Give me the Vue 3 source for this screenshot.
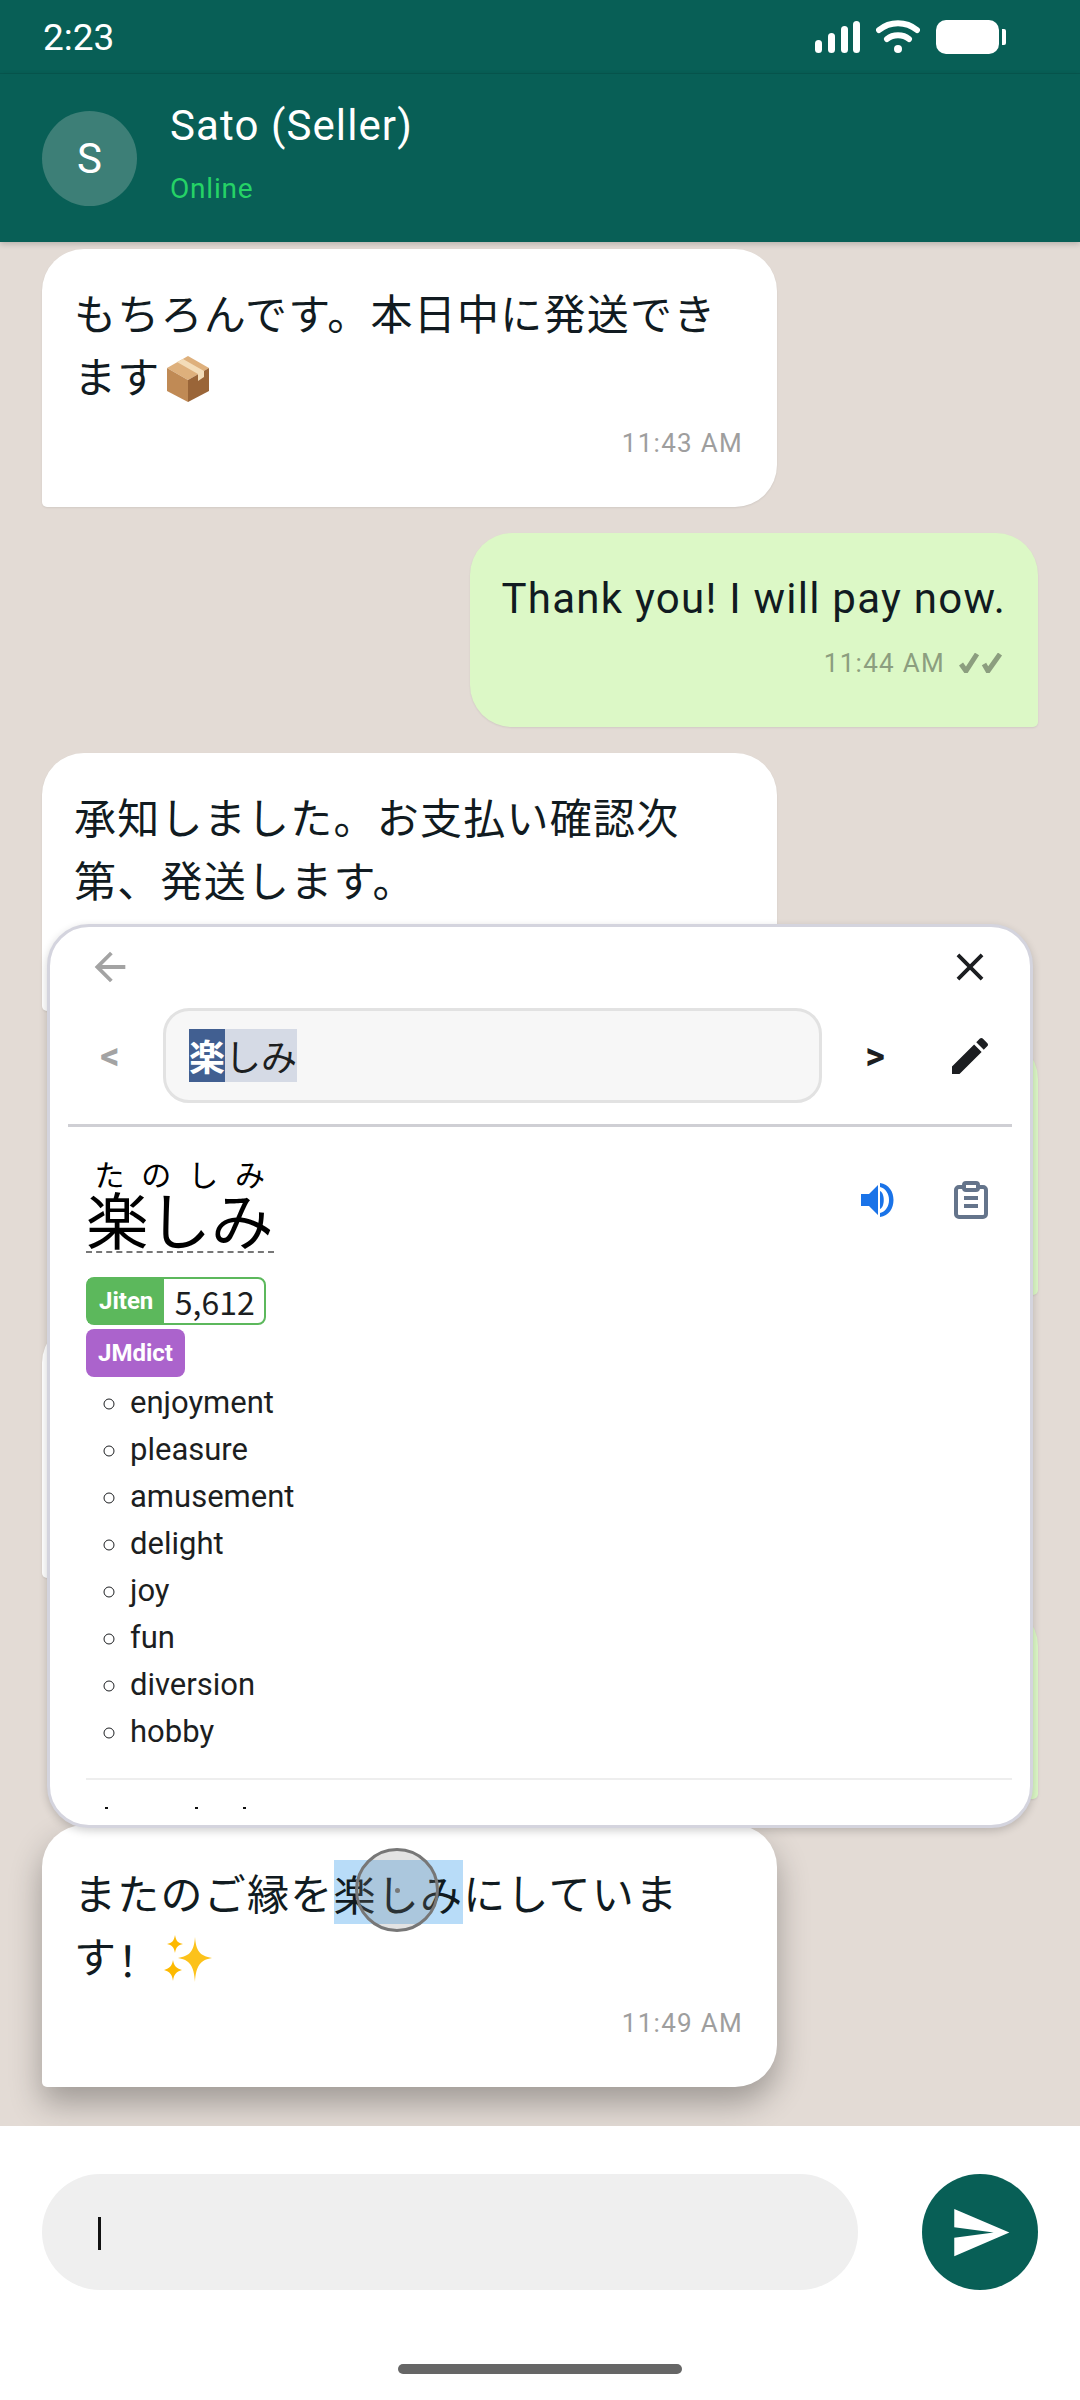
<script setup>
const senses = ['enjoyment', 'pleasure', 'amusement', 'delight', 'joy', 'fun', 'diversion', 'hobby']

// bubbles that sit behind the dictionary popup, only their edges show
const covered = [
  { id: 1, cls: 'mine tall' },
  { id: 2, cls: 'theirs tall' },
  { id: 3, cls: 'mine short' }
]
</script>

<template>
  <div class="phone">
    <div class="status">
      <span class="clock">2:23</span>
      <div class="status-icons">
        <svg width="46" height="34" viewBox="0 0 46 34" fill="#fff">
          <rect x="0" y="20" width="7" height="13" rx="3.5" />
          <rect x="13" y="13" width="7" height="20" rx="3.5" />
          <rect x="26" y="6" width="7" height="27" rx="3.5" />
          <rect x="38" y="1" width="7" height="32" rx="3.5" />
        </svg>
        <svg class="wifi" width="44" height="34" viewBox="0 0 44 34" fill="none" stroke="#fff" stroke-linecap="round">
          <path d="M3 10 C14 1 30 1 41 10" stroke-width="6" />
          <path d="M11 19 C17 14 27 14 33 19" stroke-width="6" />
          <circle cx="22" cy="29" r="4" fill="#fff" stroke="none" />
        </svg>
        <div class="battery"></div>
        <div class="battery-tip"></div>
      </div>
    </div>

    <header class="topbar">
      <div class="avatar">S</div>
      <div class="who">
        <div class="name">Sato (Seller)</div>
        <div class="online">Online</div>
      </div>
    </header>

    <main class="chat">
      <div class="bubble theirs">
        <p>もちろんです。本日中に発送でき</p>
        <p class="emoji-line">ます<svg class="box" width="48" height="48" viewBox="0 0 48 48">
          <path d="M24 1 L45 13 L24 25 L3 13 Z" fill="#deb07c" />
          <path d="M3 13 L24 25 L24 47 L3 36 Z" fill="#c08a55" />
          <path d="M45 13 L24 25 L24 47 L45 36 Z" fill="#9a6538" />
          <path d="M13 7 L34 19 L34 26 L40 22 L40 16 L19 4 Z" fill="#f3dcb8" />
        </svg></p>
        <div class="time">11:43 AM</div>
      </div>

      <div class="bubble mine sent">
        <p>Thank you! I will pay now.</p>
        <div class="time">11:44 AM
          <svg class="checks" width="44" height="20" viewBox="0 0 44 20" fill="none" stroke="#8c9e7f" stroke-width="5">
            <path d="M2 11 L7 18 L18 1" />
            <path d="M25 11 L29 18 L41 1" />
          </svg>
        </div>
      </div>

      <div class="bubble theirs">
        <p>承知しました。お支払い確認次</p>
        <p>第、発送します。</p>
        <div class="time"></div>
      </div>

      <div v-for="b in covered" :key="b.id" class="bubble" :class="b.cls"></div>

      <div class="bubble theirs lifted">
        <p>またのご縁を<span class="sel">楽しみ</span>にしていま</p>
        <p class="emoji-line">す<span class="bang">！</span><svg class="sparkles" width="50" height="48" viewBox="0 0 50 48">
          <path d="M32 2 C33 16 37 21 49 23 C37 25 33 31 32 47 C31 31 27 25 15 23 C27 21 31 16 32 2 Z" fill="#fcc21b" />
          <path d="M12 0 C13 6 15 8 20 9 C15 10 13 12 12 18 C11 12 9 10 4 9 C9 8 11 6 12 0 Z" fill="#fdb900" />
          <path d="M10 25 C11 31 13 33 19 35 C13 37 11 39 10 46 C9 39 7 37 1 35 C7 33 9 31 10 25 Z" fill="#fdb900" />
        </svg></p>
        <div class="time">11:49 AM</div>
      </div>
    </main>

    <footer class="composer">
      <div class="field"><span class="caret"></span></div>
      <div class="send">
        <svg width="63" height="63" viewBox="0 0 24 24" fill="#fff"><path d="M2.01 21L23 12 2.01 3 2 10l15 2-15 2z" /></svg>
      </div>
    </footer>
    <div class="gesture"><span></span></div>

    <!-- dictionary popup, floats over the chat -->
    <section class="popup">
      <div class="pop-top">
        <svg width="46" height="46" viewBox="0 0 24 24" fill="#a3a3a3"><path d="M20 11H7.83l5.59-5.59L12 4l-8 8 8 8 1.41-1.41L7.83 13H20v-2z" /></svg>
        <svg width="46" height="46" viewBox="0 0 24 24" fill="#1c1e21"><path d="M19 6.41L17.59 5 12 10.59 6.41 5 5 6.41 10.59 12 5 17.59 6.41 19 12 13.41 17.59 19 19 17.59 13.41 12z" /></svg>
      </div>
      <div class="pop-search">
        <span class="nav prev">&lt;</span>
        <div class="search"><span class="hl-first">楽</span><span class="hl-rest">しみ</span></div>
        <span class="nav next">&gt;</span>
        <svg width="48" height="48" viewBox="0 0 24 24" fill="#1c1e21"><path d="M3 17.25V21h3.75L17.81 9.94l-3.75-3.75L3 17.25zM20.71 7.04c.39-.39.39-1.02 0-1.41l-2.34-2.34c-.39-.39-1.02-.39-1.41 0l-1.83 1.83 3.75 3.75 1.83-1.83z" /></svg>
      </div>
      <div class="rule"></div>

      <div class="entry">
        <div class="entry-head">
          <ruby class="word">楽しみ<rt>たのしみ</rt></ruby>
          <div class="entry-actions">
            <svg width="36" height="36" viewBox="0 0 36 36" fill="#1a73e8">
              <path d="M1 12 H9 L18 3 V33 L9 24 H1 Z" />
              <path d="M20 9 C25 11 25 25 20 27 Z" />
              <path d="M20 1 C38 3 38 33 20 35 V31 C32 28 32 8 20 5 Z" />
            </svg>
            <svg width="34" height="38" viewBox="0 0 34 38" fill="none" stroke="#64748b" stroke-width="4">
              <rect x="2" y="6" width="30" height="30" rx="3" />
              <rect x="10" y="2" width="14" height="7" rx="2" fill="#fff" />
              <path d="M10 17 H24 M10 25 H24" />
            </svg>
          </div>
        </div>

        <div class="tag freq"><span class="tag-name">Jiten</span><span class="tag-val">5,612</span></div>
        <div class="tag dict">JMdict</div>

        <ul class="senses">
          <li v-for="s in senses" :key="s">{{ s }}</li>
        </ul>
        <div class="rule-light"></div>
        <!-- tops of the next entry, cut off by the popup edge -->
        <div class="cut"><i></i><i></i><i></i></div>
      </div>
    </section>

    <div class="touch"><span></span></div>
  </div>
</template>

<style>
html, body { margin: 0; background: #e3dbd5; }
</style>

<style scoped>
.phone {
  position: relative;
  width: 1080px;
  height: 2400px;
  display: flex;
  flex-direction: column;
  overflow: hidden;
  background: #e3dbd5;
  font-family: Roboto, "Noto Sans CJK JP", sans-serif;
  color: #1c1e21;
}
p { margin: 0; }

.status {
  height: 73px;
  flex: none;
  display: flex;
  align-items: center;
  justify-content: space-between;
  padding: 0 74px 0 43px;
  background: #085f56;
  border-bottom: 1px solid #07574f;
  color: #fff;
}
.clock { font-size: 37px; margin-top: 1px; }
.status-icons { display: flex; align-items: center; }
.wifi { margin-left: 15px; }
.battery { width: 63px; height: 34px; margin-left: 16px; background: #fff; border-radius: 10px; }
.battery-tip { width: 4px; height: 16px; margin-left: 3px; background: #fff; border-radius: 0 2px 2px 0; }

.topbar {
  height: 168px;
  flex: none;
  display: flex;
  align-items: center;
  padding: 0 42px;
  background: #085f56;
  box-shadow: 0 2px 6px rgba(0,0,0,.2);
  position: relative;
  z-index: 1;
}
.avatar {
  width: 95px;
  height: 95px;
  flex: none;
  border-radius: 50%;
  background: #3d7f77;
  color: #fff;
  font-size: 42px;
  display: flex;
  align-items: center;
  justify-content: center;
}
.who { margin-left: 33px; margin-top: -12px; }
.name { font-size: 42px; line-height: 56px; color: #fff; letter-spacing: 1.1px; }
.online { font-size: 28px; line-height: 36px; margin-top: 17px; color: #25d366; letter-spacing: .8px; }

.chat {
  flex: 1;
  min-height: 0;
  padding: 7px 42px 0;
  display: flex;
  flex-direction: column;
  gap: 26.2px;
  overflow: hidden;
}
.bubble {
  flex: none;
  box-sizing: border-box;
  padding: 35px 32px 44.5px;
  font-size: 42px;
  line-height: 63px;
  letter-spacing: 1.25px;
  color: #111b21;
}
.theirs {
  align-self: flex-start;
  width: 735px;
  background: #fff;
  border-radius: 42px 42px 42px 5px;
  box-shadow: 0 1px 2px rgba(0,0,0,.08);
}
.mine {
  align-self: flex-end;
  background: #dcf8c6;
  border-radius: 42px 42px 5px 42px;
  box-shadow: 0 1px 2px rgba(0,0,0,.08);
}
.sent { padding-top: 34px; padding-bottom: 45.5px; }
.tall { width: 568px; height: 257.5px; }
.short { width: 568px; height: 194.5px; }
.lifted { box-shadow: 0 16px 32px rgba(0,0,0,.3); position: relative; }
.time {
  display: flex;
  justify-content: flex-end;
  align-items: center;
  gap: 14px;
  height: 38px;
  margin-top: 14px;
  padding-right: 2px;
  font-size: 26px;
  line-height: 38px;
  letter-spacing: 1.3px;
  color: #9e9e9e;
}
.mine .time { color: #8c9e7f; padding-right: 3px; }
.emoji-line { display: flex; align-items: center; height: 63px; }
.box { margin-left: 3px; }
.bang { font-family: "Noto Sans CJK SC", sans-serif; }
.sparkles { margin-left: 2px; }
.sel {
  font-family: "Noto Sans CJK JP", sans-serif;
  padding: 1.5px 0;
  background: #b8dcf8;
}

.composer {
  flex: none;
  height: 274px;
  box-sizing: border-box;
  padding: 48px 42px 0;
  display: flex;
  gap: 64px;
  background: #fff;
  align-items: flex-start;
}
.field {
  flex: 1;
  height: 116px;
  border-radius: 58px;
  background: #efefef;
  display: flex;
  align-items: center;
  padding-left: 56px;
}
.caret { width: 3px; height: 33px; margin-top: 3px; background: #111; }
.send {
  width: 116px;
  height: 116px;
  border-radius: 50%;
  background: #085f56;
  display: flex;
  align-items: center;
  justify-content: center;
}
.gesture {
  position: absolute;
  left: 0;
  right: 0;
  bottom: 26px;
  display: flex;
  justify-content: center;
}
.gesture span { width: 284px; height: 10px; border-radius: 5px; background: #666; }

.popup {
  position: absolute;
  left: 47px;
  top: 924px;
  width: 986px;
  height: 904px;
  box-sizing: border-box;
  border: 3px solid #d4d4de;
  border-radius: 42px;
  background: #fff;
  overflow: hidden;
  box-shadow: 0 3px 8px rgba(0,0,0,.18);
}
.pop-top {
  height: 79px;
  margin-bottom: 2px;
  display: flex;
  align-items: center;
  justify-content: space-between;
  padding: 0 37px;
}
.pop-search {
  height: 95px;
  display: flex;
  align-items: center;
  padding: 0 36px 0 37px;
}
.nav { width: 46px; text-align: center; font-size: 38px; font-weight: 700; color: #1c1e21; }
.prev { color: #a3a3a3; margin-right: 30px; }
.next { margin: 0 48px 0 30px; }
.search {
  flex: 1;
  height: 95px;
  box-sizing: border-box;
  border: 3px solid #e2e2e2;
  border-radius: 26px;
  background: #f7f7f7;
  display: flex;
  align-items: center;
  padding-left: 23px;
  font-family: "Noto Sans CJK JP", sans-serif;
  font-size: 36px;
  line-height: 53px;
}
.hl-first { background: #415f91; color: #fff; font-weight: 700; }
.hl-rest { background: #d5dae5; }
.rule { height: 3px; margin: 21px 18px 0; background: #cfcfd4; }

.entry { padding: 0 18px 0 36px; }
.entry-head { display: flex; justify-content: space-between; align-items: flex-start; padding-top: 32px; }
.word {
  font-family: "Noto Sans CJK JP", sans-serif;
  font-size: 62.5px;
  line-height: 66px;
  color: #000;
  border-bottom: 2px dashed #777;
}
.word rt { font-size: 30px; line-height: 33px; }
.entry-actions { display: flex; align-items: center; gap: 58px; margin: 22px 24px 0 0; }

.tag {
  width: fit-content;
  height: 48px;
  box-sizing: border-box;
  border-radius: 8px;
  display: flex;
  align-items: center;
  font-size: 24px;
  font-weight: 700;
  color: #fff;
}
.freq { margin-top: 24px; border: 2px solid #5cb85c; }
.tag-name { height: 100%; display: flex; align-items: center; padding: 0 11px; background: #5cb85c; }
.tag-val {
  padding: 0 9px 0 10.5px;
  font-family: "Noto Sans CJK JP", sans-serif;
  font-size: 32px;
  font-weight: 400;
  color: #1c1e21;
}
.dict { margin-top: 4px; padding: 0 12px; background: #ab63cc; }

.senses {
  margin: 2px 0 0;
  padding: 0 0 0 44px;
  list-style: circle;
  font-size: 31px;
  line-height: 47px;
  color: #1c1e21;
}
.rule-light { height: 2px; margin-top: 23px; background: #eee; }
.cut { position: relative; height: 40px; }
.cut i { position: absolute; top: 27px; width: 3px; height: 2px; background: #111; }
.cut i:nth-child(1) { left: 19px; }
.cut i:nth-child(2) { left: 109px; }
.cut i:nth-child(3) { left: 157px; }

.touch {
  position: absolute;
  left: 355px;
  top: 1848px;
  width: 84px;
  height: 84px;
  box-sizing: border-box;
  border: 3px solid #777;
  border-radius: 50%;
  background: rgba(128, 128, 128, .22);
  display: flex;
  align-items: center;
  justify-content: center;
}
.touch span { width: 5px; height: 5px; border-radius: 50%; background: #777; }
</style>
